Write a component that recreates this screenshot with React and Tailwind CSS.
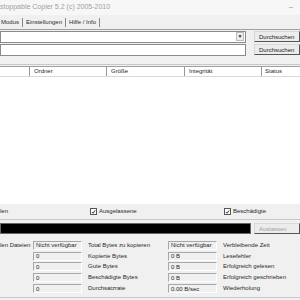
import React from "react";

function Check() {
  return (
    <span className="w-[7px] h-[7px] border border-[#555] bg-white flex items-center justify-center">
      <svg width="6" height="6" viewBox="0 0 6 6">
        <path d="M1 3 L2.5 4.5 L5 1" stroke="#111" strokeWidth="1" fill="none" />
      </svg>
    </span>
  );
}

function Box({ children }) {
  return (
    <div className="h-[9px] border-t border-l border-[#a8a8a8] border-b border-r border-b-white border-r-white flex items-center pl-[2px] leading-none">
      {children}
    </div>
  );
}

function Button({ children, disabled }) {
  return (
    <div
      className={
        "w-[46px] h-[11px] bg-[#ececec] border border-[#d8d8d8] border-b-[#555] border-r-[#555] flex items-center pl-[4px] leading-none whitespace-nowrap " +
        (disabled ? "text-[#a0a0a0]" : "text-[#222]")
      }
    >
      {children}
    </div>
  );
}

const stats = [
  ["len Dateien", "Nicht verfügbar", "Total Bytes zu kopieren", "Nicht verfügbar", "Verbleibende Zeit"],
  ["", "0", "Kopierte Bytes", "0 B", "Lesefehler"],
  ["", "0", "Gute Bytes", "0 B", "Erfolgreich gelesen"],
  ["", "0", "Beschädigte Bytes", "0 B", "Erfolgreich geschrieben"],
  ["", "0", "Durchsatzrate", "0.00 B/sec", "Wiederholung"],
];

export default function App() {
  return (
    <div className="w-[300px] h-[300px] overflow-hidden bg-[#f0f0f0] font-['Liberation_Sans',sans-serif] text-[6px] text-[#2a2a2a] flex flex-col">
      {/* title bar */}
      <div className="h-[15px] shrink-0 bg-[#f7f7f7] flex items-center justify-between pr-[7px]">
        <span className="text-[7px] text-[#a0a0a0] whitespace-nowrap">stoppable Copier 5.2 (c) 2005-2010</span>
        <span className="text-[7px] text-[#888]">–</span>
      </div>

      {/* menu */}
      <div className="h-[15px] shrink-0 flex items-center pl-[1px] gap-[3px] whitespace-nowrap border-b border-[#a0a0a0]">
        <span>Modus</span>
        <span className="w-px h-[9px] bg-[#888]" />
        <span>Einstellungen</span>
        <span className="w-px h-[9px] bg-[#888]" />
        <span>Hilfe / Info</span>
        <span className="w-px h-[9px] bg-[#888]" />
      </div>

      {/* source / target */}
      <div className="flex flex-col shrink-0">
        <div className="h-[13px] flex items-center">
          <div className="w-[253px] h-[12px] bg-white border border-[#8a8a8a] flex justify-end items-center pr-[1px]">
            <div className="w-[8px] h-[9px] bg-[#eee] border border-[#bbb] flex items-center justify-center text-[5px]">▼</div>
          </div>
          <div className="ml-[8px]">
            <Button>Durchsuchen</Button>
          </div>
        </div>
        <div className="h-[13px] flex items-center">
          <div className="w-[253px] h-[12px] bg-white border border-[#8a8a8a]" />
          <div className="ml-[8px]">
            <Button>Durchsuchen</Button>
          </div>
        </div>
      </div>

      <div className="h-[9px] shrink-0 border-b border-[#c8c8c8] mb-[1px]" />

      {/* list */}
      <div className="h-[138px] shrink-0 bg-white border-t border-[#a0a0a0] flex flex-col">
        <div className="h-[10px] flex border-b border-[#d8d8d8] whitespace-nowrap">
          <div className="w-[30px] border-r border-[#999]" />
          <div className="w-[77px] border-r border-[#999] pl-[4px] flex items-center">Ordner</div>
          <div className="w-[78px] border-r border-[#999] pl-[4px] flex items-center">Größe</div>
          <div className="w-[77px] border-r border-[#999] pl-[4px] flex items-center">Integrität</div>
          <div className="flex-1 pl-[3px] flex items-center">Status</div>
        </div>
      </div>

      {/* checkboxes */}
      <div className="h-[16px] shrink-0 flex items-center border-b border-[#c8c8c8] whitespace-nowrap">
        <span className="w-[90px]">len</span>
        <div className="w-[134px] flex items-center gap-[2px]">
          <Check />
          <span>Ausgelassene</span>
        </div>
        <div className="flex items-center gap-[2px]">
          <Check />
          <span>Beschädigte</span>
        </div>
      </div>

      {/* progress */}
      <div className="h-[17px] shrink-0 flex items-center">
        <div className="w-[260px] h-[11px] bg-black border border-[#666]" />
        <div className="ml-[3px]">
          <Button disabled>Auslassen</Button>
        </div>
      </div>

      {/* stats */}
      <div className="flex flex-col pt-[3px] pb-[3px] border-b border-[#c8c8c8] whitespace-nowrap">
        {stats.map((r, i) => (
          <div key={i} className="h-[10.8px] flex items-center">
            <div className="w-[33px]">{r[0]}</div>
            <div className="w-[49px]">
              <Box>{r[1]}</Box>
            </div>
            <div className="w-[86px] pl-[6px]">{r[2]}</div>
            <div className="w-[49px]">
              <Box>{r[3]}</Box>
            </div>
            <div className="pl-[6px]">{r[4]}</div>
          </div>
        ))}
      </div>
    </div>
  );
}
